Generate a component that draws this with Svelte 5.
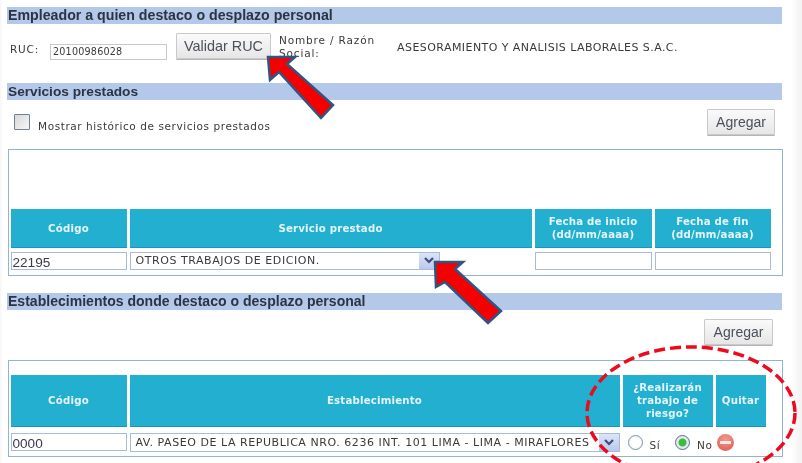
<script>
  const serviceCols = [
    { label: 'Código', cls: 'c1' },
    { label: 'Servicio prestado', cls: 'c2' },
    { label: 'Fecha de inicio\n(dd/mm/aaaa)', cls: 'c3' },
    { label: 'Fecha de fin\n(dd/mm/aaaa)', cls: 'c4' }
  ];
  const estCols = [
    { label: 'Código', cls: 'c1' },
    { label: 'Establecimiento', cls: 'e2' },
    { label: '¿Realizarán\ntrabajo de\nriesgo?', cls: 'e3' },
    { label: 'Quitar', cls: 'e4' }
  ];
</script>

<div class="page">
  <div class="content">
    <h2 class="bar first">Empleador a quien destaco o desplazo personal</h2>
    <div class="ruc-row">
      <span class="ruc-label">RUC:</span>
      <span class="input ruc-input">20100986028</span>
      <button class="btn validar">Validar RUC</button>
      <span class="razon">Nombre / Razón<br />Social:</span>
      <span class="razon-value">ASESORAMIENTO Y ANALISIS LABORALES S.A.C.</span>
    </div>

    <h2 class="bar second-bar">Servicios prestados</h2>
    <div class="tools-row">
      <span class="check"></span>
      <span class="check-label">Mostrar histórico de servicios prestados</span>
      <button class="btn add">Agregar</button>
    </div>

    <div class="box box1">
      <div class="grid grid1">
        {#each serviceCols as col}
          <div class="th">{col.label}</div>
        {/each}
        <span class="input code">22195</span>
        <div class="select">
          <span>OTROS TRABAJOS DE EDICION.</span>
          <span class="arrow-btn"><svg width="10" height="7" viewBox="0 0 10 7"><path d="M1 1l4 4 4-4" fill="none" stroke="#3f4f78" stroke-width="2.2" /></svg></span>
        </div>
        <span class="input"></span>
        <span class="input"></span>
      </div>
    </div>

    <h2 class="bar third">Establecimientos donde destaco o desplazo personal</h2>
    <div class="tools-row second">
      <button class="btn add">Agregar</button>
    </div>

    <div class="box box2">
      <div class="grid grid2">
        {#each estCols as col}
          <div class="th">{col.label}</div>
        {/each}
        <span class="input code">0000</span>
        <div class="select">
          <span>AV. PASEO DE LA REPUBLICA NRO. 6236 INT. 101 LIMA - LIMA - MIRAFLORES</span>
          <span class="arrow-btn"><svg width="10" height="7" viewBox="0 0 10 7"><path d="M1 1l4 4 4-4" fill="none" stroke="#3f4f78" stroke-width="2.2" /></svg></span>
        </div>
        <div class="radios">
          <span class="radio"></span><span class="r-label si">Sí</span>
          <span class="radio on"></span><span class="r-label">No</span>
          <span class="remove"></span>
        </div>
      </div>
    </div>
  </div>

  <svg class="overlay" width="802" height="463" viewBox="0 0 802 463">
    <polygon points="268,57 295,57 287,64 333,105 321,118 279,72 270,80" fill="#f50000" stroke="#2f5582" stroke-width="2.5" stroke-linejoin="miter" />
    <polygon points="435,262 463,262 455,269 501,311 488,323 445,282 436,287" fill="#f50000" stroke="#2f5582" stroke-width="2.5" stroke-linejoin="miter" />
    <ellipse cx="691" cy="413" rx="104" ry="66" fill="none" stroke="#ee0a1e" stroke-width="3.5" stroke-dasharray="11 5" />
  </svg>
</div>

<style>
  :global(body) {
    margin: 0;
    background: #fff;
  }
  .page {
    position: relative;
    width: 802px;
    height: 463px;
    overflow: hidden;
    background: linear-gradient(90deg, #f6f6f6 0, #fff 3px, #fff 791px, #f4f4f4 800px);
    font-family: "DejaVu Sans", Verdana, sans-serif;
    color: #3a3a3a;
    filter: blur(0.35px);
  }
  .content {
    display: flex;
    flex-direction: column;
    padding: 7px 0 0 7px;
    width: 775px;
  }
  .bar {
    margin: 0;
    height: 17px;
    background: #b4c9e9;
    font: bold 14.2px/17px "Liberation Sans", Arial, sans-serif;
    color: #2b3344;
    padding-left: 1px;
  }
  .second-bar {
    font-size: 13.7px;
  }
  .third {
    margin-top: 17px;
    font-size: 14.05px;
  }
  .ruc-row {
    position: relative;
    height: 59px;
    display: flex;
    align-items: flex-start;
    font-size: 10.5px;
  }
  .ruc-label {
    margin: 19px 0 0 3px;
    width: 40px;
    letter-spacing: 0.8px;
  }
  .input {
    display: block;
    box-sizing: border-box;
    border: 1.5px solid #a9bcd4;
    background: #fff;
    height: 18px;
  }
  .ruc-input {
    margin-top: 20px;
    width: 117px;
    height: 16px;
    border-color: #c8c8c8;
    font-size: 9.6px;
    line-height: 13px;
    padding-left: 2px;
    letter-spacing: 0.2px;
  }
  .btn {
    box-sizing: border-box;
    border: 1px solid #c9c9c9;
    border-radius: 1px;
    background: linear-gradient(#fafafa, #e6e6e6);
    box-shadow: 0 1px 0 #b5b5b5;
    font-family: "Liberation Sans", Arial, sans-serif;
    color: #4a505c;
    padding: 0;
  }
  .validar {
    margin: 9px 0 0 9px;
    width: 95px;
    height: 26px;
    font-size: 14.4px;
  }
  .razon {
    margin: 10px 0 0 8px;
    width: 118px;
    line-height: 13px;
    font-size: 10.5px;
    letter-spacing: 0.85px;
    white-space: nowrap;
  }
  .razon-value {
    margin-top: 17px;
    font-size: 11px;
    letter-spacing: 0.44px;
    white-space: nowrap;
  }
  .tools-row {
    height: 49px;
    display: flex;
    align-items: flex-start;
    position: relative;
  }
  .check {
    box-sizing: border-box;
    width: 16px;
    height: 16px;
    margin: 14px 0 0 7px;
    border: 1.5px solid #6f8194;
    border-radius: 1px;
    background: linear-gradient(135deg, #d8d8d8, #f6f6f6);
  }
  .check-label {
    margin: 20px 0 0 8px;
    font-size: 10.5px;
    letter-spacing: 0.58px;
  }
  .tools-row .add {
    position: absolute;
    right: 7px;
    top: 0;
    margin-top: 9px;
    width: 68px;
    height: 26px;
    font-size: 14px;
  }
  .second {
    height: 50px;
  }
  .second .add {
    right: 9px;
    width: 69px;
  }
  .box {
    box-sizing: border-box;
    width: 775px;
    margin-left: 1px;
    border: 1.5px solid #93b3d2;
    background: #fff;
  }
  .box1 {
    height: 127px;
    padding: 59px 0 0 1.5px;
  }
  .box2 {
    height: 97px;
    padding: 14px 0 0 1.5px;
  }
  .grid {
    display: grid;
    column-gap: 3px;
  }
  .grid1 {
    grid-template-columns: 116px 402px 117px 116px;
    grid-template-rows: 39px 18px;
    row-gap: 3.5px;
  }
  .grid2 {
    grid-template-columns: 116px 490px 90px 50px;
    grid-template-rows: 52px 19px;
    row-gap: 6px;
  }
  .th {
    display: flex;
    align-items: center;
    justify-content: center;
    text-align: center;
    white-space: pre-line;
    background: #23afcf;
    border-bottom: 1px solid #1c93c4;
    color: #e4f5f9;
    font-weight: bold;
    font-size: 10.2px;
    line-height: 13px;
    letter-spacing: 0.2px;
  }
  .code {
    font: 13.6px/20px "Liberation Sans", Arial, sans-serif;
    padding-left: 1px;
    color: #3a3a50;
    overflow: hidden;
  }
  .select {
    box-sizing: border-box;
    display: flex;
    align-items: center;
    justify-content: space-between;
    border: 1.5px solid #a9bcd4;
    padding: 0 0 0 5px;
    font-size: 11px;
    letter-spacing: 0.55px;
    white-space: nowrap;
    overflow: hidden;
  }
  .grid1 .select {
    width: 310px;
  }
  .arrow-btn {
    display: flex;
    align-items: center;
    justify-content: center;
    width: 20px;
    height: 100%;
    background: linear-gradient(#dbe4f8, #b9c8ef);
    flex: none;
  }
  .radios {
    grid-column: 3 / 5;
    display: flex;
    align-items: center;
    padding-left: 5px;
    font-size: 10.5px;
    letter-spacing: 0.5px;
  }
  .radio {
    box-sizing: border-box;
    width: 15px;
    height: 15px;
    border-radius: 50%;
    border: 1.5px solid #7d93a8;
    background: radial-gradient(circle, #fff 45%, #e4e8ec 100%);
  }
  .radio.on {
    background: radial-gradient(circle, #3dbb3d 0 3.5px, #e2eaf0 4.5px);
    border-color: #52708c;
  }
  .r-label {
    margin: 5px 5px 0 7px;
  }
  .r-label.si {
    margin-right: 15px;
  }
  .remove {
    position: relative;
    width: 17px;
    height: 17px;
    border-radius: 50%;
    background: radial-gradient(circle at 50% 30%, #f39a90, #d9584d);
  }
  .remove::after {
    content: "";
    position: absolute;
    left: 3px;
    right: 3px;
    top: 7px;
    height: 3px;
    background: #fbe8e4;
  }
  .overlay {
    position: absolute;
    inset: 0;
  }
</style>
